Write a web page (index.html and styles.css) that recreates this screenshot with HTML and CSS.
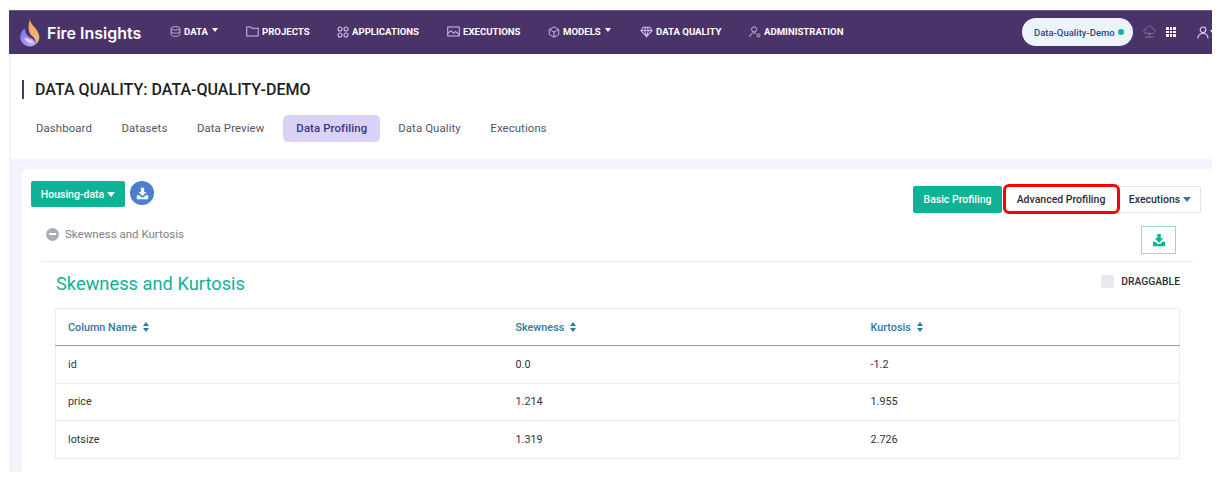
FILE: index.html
```html
<!DOCTYPE html>
<html lang="en">
<head>
    <meta charset="UTF-8">
    <title>Data Quality</title>
    <link rel="stylesheet" href="styles.css">
</head>
<body>
    <div class="app">
        <nav class="navbar">
            <div class="brand">
                <svg class="logo" viewBox="0 0 21 28" width="21" height="28">
                    <defs>
                        <linearGradient id="flame" x1="0" y1="0" x2="0" y2="1"><stop offset="0" stop-color="#f7a93f"/><stop offset="1" stop-color="#e6b8a0"/></linearGradient>
                        <linearGradient id="bowl" x1="0" y1="0" x2="1" y2="1"><stop offset="0" stop-color="#7d68ea"/><stop offset="1" stop-color="#c4b4f8"/></linearGradient>
                    </defs>
                    <path d="M10 0c0 4 3 6 6 10 3 4 4 8 3 11-1 2-2 3-3 4 0-4-2-7-5-9-3-4-3-10-1-16z" fill="url(#flame)"/>
                    <path d="M5 9C1 12-1 17 1 22c3 6 11 7 15 3-1-4-4-6-7-7-3-2-4-5-4-9z" fill="url(#bowl)"/>
                    <path d="M4 19c3 0 7 1 10 5-3 1-7 0-10-5z" fill="#ded6fb"/>
                </svg>
                <span class="brand-name">Fire Insights</span>
            </div>
            <ul class="nav-menu">
                <li class="nav-item w-data">
                    <svg viewBox="0 0 14 14" width="11" height="11"><ellipse cx="7" cy="3" rx="5.5" ry="2.2"/><path d="M1.5 3v8c0 1.2 2.5 2.2 5.5 2.2s5.500-1 5.500-2.200V3M1.500 7c0 1.200 2.500 2.200 5.500 2.200s5.500-1 5.500-2.200"/></svg>
                    DATA<span class="caret-up"></span>
                </li>
                <li class="nav-item w-projects">
                    <svg viewBox="0 0 14 12" width="13" height="11"><path d="M.7 10.800V1h4.500l1 1.500h7v8.300z"/></svg>
                    PROJECTS
                </li>
                <li class="nav-item w-apps">
                    <svg viewBox="0 0 12 12" width="12" height="12"><circle cx="3" cy="3" r="2"/><circle cx="9" cy="3" r="2"/><circle cx="3" cy="9" r="2"/><circle cx="9" cy="9" r="2"/></svg>
                    APPLICATIONS
                </li>
                <li class="nav-item w-exec">
                    <svg viewBox="0 0 14 12" width="13" height="11"><path d="M.7 1h12.600v10H.7zM.7 8l3.500-3 3 3 2-2 4 3.500"/></svg>
                    EXECUTIONS
                </li>
                <li class="nav-item w-models">
                    <svg viewBox="0 0 14 14" width="12" height="12"><path d="M7 1l5.500 3v6L7 13l-5.500-3V4zM1.500 4L7 7l5.500-3M7 7v6"/></svg>
                    MODELS<span class="caret-up"></span>
                </li>
                <li class="nav-item w-dq">
                    <svg viewBox="0 0 14 12" width="13" height="12"><path d="M3.500 1h7L13 4.500 7 11 1 4.500zM1 4.500h12M5 4.500L7 11l2-6.500M5 4.500L6 1M9 4.500L8 1"/></svg>
                    DATA QUALITY
                </li>
                <li class="nav-item">
                    <svg viewBox="0 0 14 14" width="12" height="12"><circle cx="6" cy="4" r="3"/><path d="M1 13c0-3 2-5 5-5 1 0 1.500.2 2 .4"/><circle cx="11" cy="11" r="1.800"/></svg>
                    ADMINISTRATION
                </li>
            </ul>
            <div class="nav-right">
                <div class="project-pill">Data-Quality-Demo<span class="status-dot"></span></div>
                <svg class="cloud-icon" viewBox="0 0 14 14" width="13" height="14"><path d="M3.500 8.500C1.800 8.500 1 7.300 1 6s1-2.500 2.300-2.500C3.800 2 5.200 1 7 1s3.300 1 3.700 2.500C12 3.500 13 4.700 13 6s-.8 2.500-2.500 2.500zM7 8.500v3M2.500 12.500h9"/></svg>
                <div class="grid-icon"><i></i><i></i><i></i><i></i><i></i><i></i><i></i><i></i><i></i></div>
                <svg class="user-icon" viewBox="0 0 12 13" width="12" height="13"><circle cx="6" cy="3.800" r="2.800"/><path d="M1 12.500c0-3 2-5 5-5s5 2 5 5"/></svg>
                <span class="user-caret"></span>
            </div>
        </nav>

        <header class="page-head">
            <h1 class="page-title">DATA QUALITY: DATA-QUALITY-DEMO</h1>
            <div class="tabs">
                <a class="tab">Dashboard</a>
                <a class="tab">Datasets</a>
                <a class="tab">Data Preview</a>
                <a class="tab active">Data Profiling</a>
                <a class="tab">Data Quality</a>
                <a class="tab">Executions</a>
            </div>
        </header>

        <main class="content">
            <section class="card">
                <div class="toolbar">
                    <div class="toolbar-left">
                        <button class="btn btn-green dataset-btn">Housing-data<span class="caret"></span></button>
                        <span class="round-download">
                            <svg viewBox="0 0 16 16" width="13" height="13"><path d="M6 1h4v5h3L8 11 3 6h3z"/><path d="M1 10h3l2.500 2.500h3L12 10h3v5H1z"/></svg>
                        </span>
                    </div>
                    <div class="profile-btns">
                        <button class="btn btn-green basic-btn">Basic Profiling</button>
                        <button class="btn btn-outline advanced-btn">Advanced Profiling</button>
                        <button class="btn btn-outline exec-btn">Executions<span class="caret caret-blue"></span></button>
                    </div>
                </div>

                <div class="section-head">
                    <div class="section-name">
                        <span class="minus-icon"></span>
                        Skewness and Kurtosis
                    </div>
                    <span class="outline-download">
                        <svg viewBox="0 0 16 16" width="14" height="14"><path d="M6 1h4v5h3L8 11 3 6h3z"/><path d="M1 10h3l2.500 2.500h3L12 10h3v5H1z"/></svg>
                    </span>
                </div>

                <div class="report">
                    <div class="report-head">
                        <h2>Skewness and Kurtosis</h2>
                        <label class="draggable"><span class="check"></span>DRAGGABLE</label>
                    </div>
                    <table class="data-table">
                        <thead>
                            <tr>
                                <th class="col-name">Column Name<span class="sort"></span></th>
                                <th class="col-skew">Skewness<span class="sort"></span></th>
                                <th>Kurtosis<span class="sort"></span></th>
                            </tr>
                        </thead>
                        <tbody>
                            <tr><td>id</td><td>0.0</td><td>-1.2</td></tr>
                            <tr><td>price</td><td>1.214</td><td>1.955</td></tr>
                            <tr><td>lotsize</td><td>1.319</td><td>2.726</td></tr>
                        </tbody>
                    </table>
                </div>
            </section>
        </main>
    </div>
</body>
</html>
```

FILE: styles.css
```css
* {
    box-sizing: border-box;
}
html, body {
    height: 100%;
}
body {
    margin: 0;
    background-color: #fff;
    font-family: Roboto, "Liberation Sans", sans-serif;
    overflow: hidden;
}
.app {
    width: 1203px;
    height: 462px;
    margin: 10px 0 0 9px;
    overflow: hidden;
    background-color: #f4f3fd;
}

/* top bar */
.navbar {
    display: flex;
    align-items: center;
    height: 44px;
    padding-left: 11px;
    background-color: #4a3368;
    border-top: 1px solid #6d5a88;
    color: #fff;
}
.brand {
    display: flex;
    align-items: center;
    width: 150px;
    flex-shrink: 0;
}
.logo {
    margin-right: 6px;
}
.brand-name {
    font-family: Inter, Roboto, sans-serif;
    font-size: 16px;
    font-weight: 600;
}
.nav-menu {
    display: flex;
    list-style: none;
    margin: -2px 0 0;
    padding: 0;
    flex: 1;
}
.nav-item {
    display: flex;
    align-items: center;
    gap: 3px;
    font-size: 9.600px;
    font-weight: 700;
}
.nav-item svg {
    fill: none;
    stroke: #d9b8ea;
    stroke-width: 1.100;
    flex-shrink: 0;
}
.w-data { width: 76px; }
.w-projects { width: 91px; }
.w-apps { width: 110px; }
.w-exec { width: 101px; }
.w-models { width: 92px; }
.w-dq { width: 109px; }
.caret-up {
    width: 0;
    height: 0;
    margin-left: 1px;
    margin-top: -3px;
    border-left: 3.500px solid transparent;
    border-right: 3.500px solid transparent;
    border-top: 4px solid #fff;
}
.nav-right {
    display: flex;
    align-items: center;
    flex-shrink: 0;
    width: 190px;
    margin-top: -1px;
    overflow: hidden;
}
.project-pill {
    display: flex;
    align-items: center;
    flex-shrink: 0;
    height: 28px;
    width: 111px;
    padding-left: 12px;
    margin-right: 10px;
    border-radius: 14px;
    background-color: #edf3fb;
    color: #2b4a7d;
    font-size: 9.500px;
    font-weight: 500;
    white-space: nowrap;
}
.status-dot {
    width: 6px;
    height: 6px;
    margin-left: 3px;
    border-radius: 50%;
    background-color: #10b597;
}
.cloud-icon {
    fill: none;
    stroke: #8b7a9f;
    stroke-width: 1;
    margin-right: 10px;
    flex-shrink: 0;
}
.grid-icon {
    display: grid;
    grid-template-columns: repeat(3, 2.500px);
    grid-auto-rows: 2.500px;
    gap: 1px;
    margin-right: 21px;
    flex-shrink: 0;
}
.grid-icon i {
    background-color: #fff;
}
.user-icon {
    fill: none;
    stroke: #e2c6f0;
    stroke-width: 1.200;
    flex-shrink: 0;
}
.user-caret {
    flex-shrink: 0;
    width: 0;
    height: 0;
    margin-left: 1px;
    border-left: 3px solid transparent;
    border-right: 3px solid transparent;
    border-top: 4px solid #fff;
}

/* page title + tabs */
.page-head {
    height: 105px;
    margin-left: 2px;
    padding: 26px 0 0 11px;
    background-color: #fff;
}
.page-title {
    margin: 0 0 16px;
    padding-left: 11px;
    border-left: 2px solid #4a3368;
    font-size: 16.050px;
    line-height: 19px;
    font-weight: 500;
    color: #1e1e24;
}
.tabs {
    display: flex;
    margin-left: 2px;
}
.tab {
    height: 27px;
    padding: 0 12px;
    margin-right: 5.500px;
    border-radius: 5px;
    font-size: 11.400px;
    line-height: 27px;
    letter-spacing: .1px;
    color: #55555f;
}
.tab.active {
    padding: 0 13px;
    margin: 0 6px 0 1.500px;
    background-color: #d9d2f6;
    color: #40307f;
    font-weight: 500;
}

/* main card */
.content {
    padding: 10px 0 0 13px;
}
.card {
    height: 310px;
    padding: 12px 11px 0 9px;
    background-color: #fff;
    border-radius: 5px 0 0 0;
}
.toolbar {
    display: flex;
    justify-content: space-between;
}
.toolbar-left {
    display: flex;
    align-items: flex-start;
    gap: 5px;
}
.btn {
    height: 27px;
    padding: 0;
    border-radius: 2px;
    font-family: inherit;
    font-size: 10.500px;
    font-weight: 500;
}
.btn-green {
    border: 0;
    background-color: #0eb396;
    color: #fff;
}
.btn-outline {
    border: 1px solid #e1e4ec;
    background-color: #fff;
    color: #2d2d38;
}
.dataset-btn {
    width: 94px;
    height: 26px;
}
.caret {
    display: inline-block;
    width: 0;
    height: 0;
    margin-left: 3px;
    vertical-align: 1px;
    border-left: 4px solid transparent;
    border-right: 4px solid transparent;
    border-top: 5px solid #fff;
}
.caret-blue {
    border-top-color: #2d7b9f;
}
.round-download {
    display: flex;
    align-items: center;
    justify-content: center;
    width: 24px;
    height: 24px;
    border-radius: 50%;
    background-color: #4a7fd0;
}
.round-download svg {
    fill: #fff;
}
.profile-btns {
    display: flex;
    margin-top: 5px;
}
.basic-btn {
    width: 89px;
    margin-right: 1px;
}
.advanced-btn {
    width: 117px;
    height: 30px;
    margin-top: -2px;
    padding-right: 1px;
    border: 3px solid #f00;
    border-radius: 6px;
}
.exec-btn {
    width: 81px;
    border-left: 0;
    border-radius: 0 2px 2px 0;
}
.section-head {
    display: flex;
    justify-content: space-between;
    height: 48px;
    margin: 0 8px 0 11px;
    padding: 12px 17px 0 4px;
    border-bottom: 1px solid #e8e9ec;
}
.section-name {
    display: flex;
    align-items: center;
    gap: 6px;
    height: 16px;
    font-size: 11.500px;
    color: #828089;
}
.minus-icon {
    position: relative;
    width: 13px;
    height: 13px;
    border-radius: 50%;
    background-color: #a9aeb4;
}
.minus-icon::after {
    content: "";
    position: absolute;
    left: 3px;
    top: 5px;
    width: 7px;
    height: 2.500px;
    background-color: #fff;
}
.outline-download {
    display: flex;
    align-items: center;
    justify-content: center;
    width: 35px;
    height: 28px;
    border: 1px solid #8fdccd;
}
.outline-download svg {
    fill: #0eb396;
}
.report {
    padding: 0 21px 0 24px;
}
.report-head {
    display: flex;
    justify-content: space-between;
    height: 46px;
}
.report-head h2 {
    margin: 11px 0 0 1px;
    font-size: 18.300px;
    line-height: 22px;
    font-weight: 400;
    color: #0eb396;
}
.draggable {
    display: flex;
    align-items: center;
    height: 14px;
    margin-top: 12px;
    font-size: 10.300px;
    font-weight: 500;
    color: #2d2d38;
}
.check {
    width: 13px;
    height: 13px;
    margin-right: 7px;
    border-radius: 2px;
    background-color: #e6e9ed;
}
.data-table {
    width: 100%;
    border-collapse: collapse;
    border: 1px solid #eeeeef;
    table-layout: fixed;
}
.data-table th {
    height: 37px;
    padding: 0 12px;
    text-align: left;
    font-size: 10.800px;
    font-weight: 500;
    color: #2d7b9f;
    border-bottom: 1px solid #7fa8c0;
}
.data-table td {
    height: 37.500px;
    padding: 0 12px;
    font-size: 10.800px;
    color: #33333b;
    border-bottom: 1px solid #eeeeef;
}
.col-name {
    width: 448px;
}
.col-skew {
    width: 355px;
}
.sort {
    display: inline-block;
    position: relative;
    width: 7px;
    height: 10px;
    margin-left: 6px;
    vertical-align: -1px;
}
.sort::before,
.sort::after {
    content: "";
    position: absolute;
    left: 0;
    border-left: 3.500px solid transparent;
    border-right: 3.500px solid transparent;
}
.sort::before {
    top: 0;
    border-bottom: 4px solid #2d7b9f;
}
.sort::after {
    bottom: 0;
    border-top: 4px solid #2d7b9f;
}
```
